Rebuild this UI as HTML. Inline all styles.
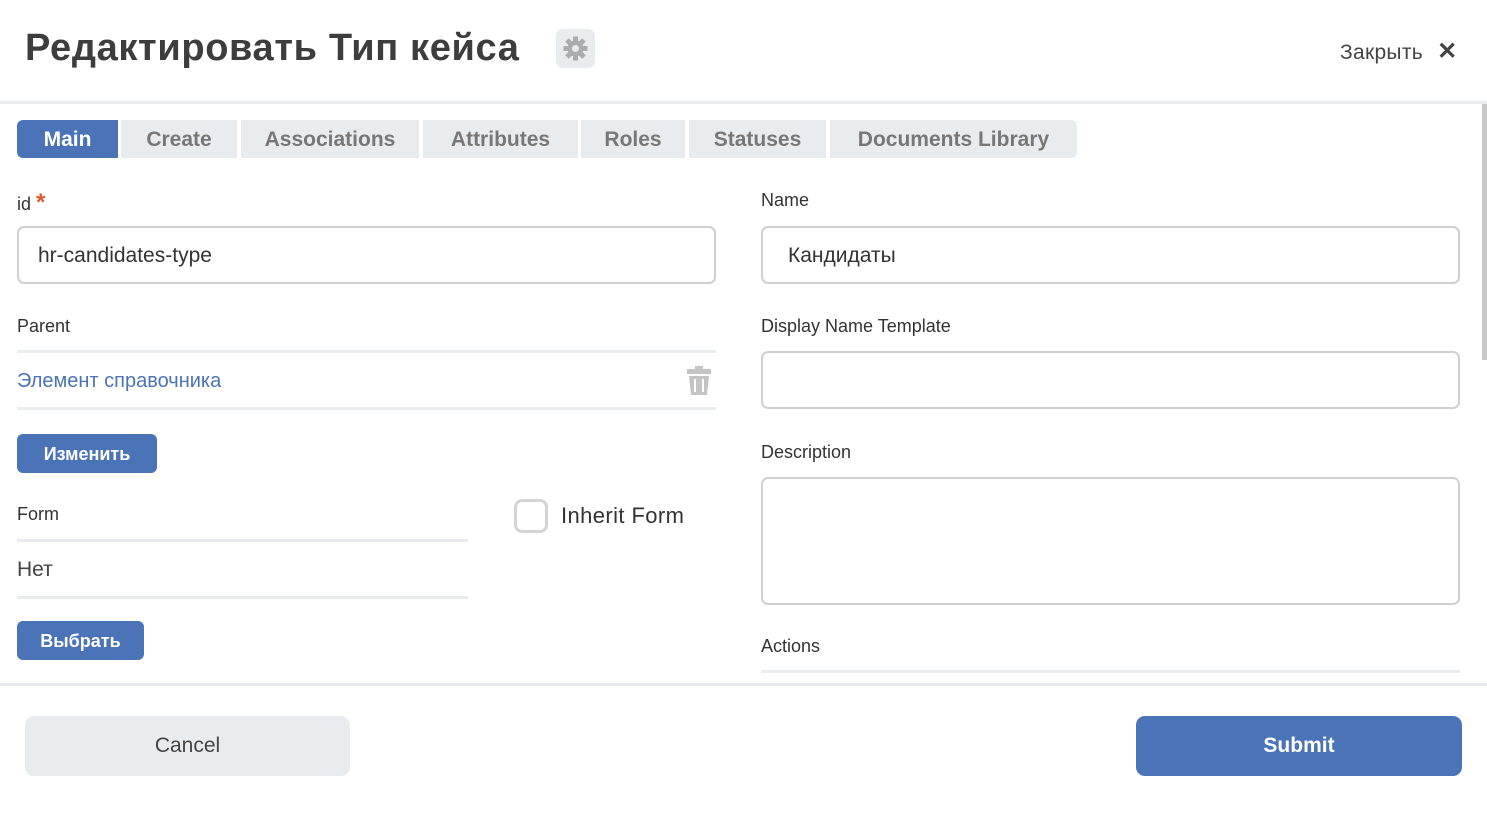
<!DOCTYPE html>
<html><head><meta charset="utf-8"><style>
*{box-sizing:border-box;margin:0;padding:0}
body{width:1487px;height:825px;background:#fff;font-family:"Liberation Sans",sans-serif;color:#333;position:relative;overflow:hidden}
.a{position:absolute}
.title{left:25px;top:27px;font-size:38px;font-weight:bold;color:#3d3d3d;letter-spacing:0.65px}
.gear{left:556px;top:29px;width:39px;height:39px;background:#e8ecef;border-radius:7px}
.close{left:1340px;top:37px;font-size:21px;color:#444;letter-spacing:0.3px}
.hline{left:0;top:101px;width:1487px;height:3px;background:#e8ecef}
.scroll{left:1482px;top:104px;width:5px;height:256px;background:#c8c8c8}
.tab{top:120px;height:38px;background:#e8ecef;color:#777;font-weight:bold;font-size:21px;line-height:40px;text-align:center}
.lbl{font-size:18px;color:#333}
.inp{border:2px solid #d0d0d0;border-radius:7px;height:58px;font-size:21px;line-height:56px;padding-left:19px;color:#333}
.line{height:3px;background:#e8ecef}
.btn{background:#4b73b8;color:#fff;font-weight:bold;font-size:18px;border-radius:6px;height:39px;line-height:40px;text-align:center}
</style></head><body>
<div class="a title">Редактировать Тип кейса</div>
<div class="a gear"><svg width="39" height="39" viewBox="0 0 39 39"><g transform="translate(19.5 19.5)" fill="#a9adb1"><circle r="8"/><g id="t"><rect x="-2.5" y="-12" width="5" height="6"/></g><use href="#t" transform="rotate(45)"/><use href="#t" transform="rotate(90)"/><use href="#t" transform="rotate(135)"/><use href="#t" transform="rotate(180)"/><use href="#t" transform="rotate(225)"/><use href="#t" transform="rotate(270)"/><use href="#t" transform="rotate(315)"/><circle r="3.5" fill="#e8ecef"/></g></svg></div>
<div class="a close">Закрыть <span style="font-size:24px;font-weight:bold;margin-left:8px">✕</span></div>
<div class="a hline"></div>
<div class="a scroll"></div>

<div class="a tab" style="left:17px;width:101px;background:#4b73b8;color:#fff;border-radius:6px 0 0 6px">Main</div>
<div class="a tab" style="left:121px;width:116px">Create</div>
<div class="a tab" style="left:241px;width:178px">Associations</div>
<div class="a tab" style="left:423px;width:155px">Attributes</div>
<div class="a tab" style="left:581px;width:104px">Roles</div>
<div class="a tab" style="left:689px;width:137px">Statuses</div>
<div class="a tab" style="left:830px;width:247px;border-radius:0 6px 6px 0">Documents Library</div>

<div class="a lbl" style="left:17px;top:189px">id <span style="color:#e05a28;font-size:24px;font-weight:bold">*</span></div>
<div class="a inp" style="left:17px;top:226px;width:699px">hr-candidates-type</div>
<div class="a lbl" style="left:761px;top:190px">Name</div>
<div class="a inp" style="left:761px;top:226px;width:699px;padding-left:25px">Кандидаты</div>

<div class="a lbl" style="left:17px;top:316px">Parent</div>
<div class="a line" style="left:17px;top:350px;width:699px"></div>
<div class="a" style="left:17px;top:370px;font-size:20px;color:#4b73b8">Элемент справочника</div>
<svg class="a" style="left:686px;top:366px" width="26" height="30" viewBox="0 0 26 30" fill="#c4c4c4"><rect x="9" y="0" width="8" height="3"/><rect x="1" y="3" width="24" height="5"/><path d="M3 10h20l-2 19H5z"/><rect x="8" y="13" width="2" height="13" fill="#fff"/><rect x="16" y="13" width="2" height="13" fill="#fff"/></svg>
<div class="a line" style="left:17px;top:407px;width:699px"></div>
<div class="a lbl" style="left:761px;top:316px">Display Name Template</div>
<div class="a inp" style="left:761px;top:351px;width:699px"></div>

<div class="a btn" style="left:17px;top:434px;width:140px">Изменить</div>
<div class="a lbl" style="left:761px;top:442px">Description</div>
<div class="a inp" style="left:761px;top:477px;width:699px;height:128px"></div>

<div class="a lbl" style="left:17px;top:504px">Form</div>
<div class="a" style="left:514px;top:499px;width:34px;height:34px;border:3px solid #d4d4d4;border-radius:8px"></div>
<div class="a" style="left:561px;top:503px;font-size:22px;color:#333;letter-spacing:0.4px">Inherit Form</div>
<div class="a line" style="left:17px;top:539px;width:451px"></div>
<div class="a" style="left:17px;top:558px;font-size:21px;color:#444">Нет</div>
<div class="a line" style="left:17px;top:596px;width:451px"></div>
<div class="a btn" style="left:17px;top:621px;width:127px">Выбрать</div>
<div class="a lbl" style="left:761px;top:636px">Actions</div>
<div class="a line" style="left:761px;top:670px;width:699px"></div>

<div class="a" style="left:0;top:683px;width:1487px;height:3px;background:#e8ecef"></div>
<div class="a" style="left:25px;top:716px;width:325px;height:60px;background:#e8ecef;border-radius:9px;text-align:center;line-height:60px;font-size:21px;color:#444">Cancel</div>
<div class="a" style="left:1136px;top:716px;width:326px;height:60px;background:#4b73b8;border-radius:9px;text-align:center;line-height:60px;font-size:21px;font-weight:bold;color:#fff">Submit</div>
</body></html>
